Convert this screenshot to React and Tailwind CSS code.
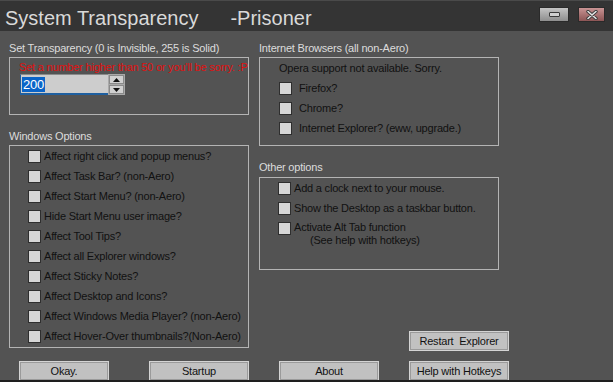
import React from 'react';

const font = { fontFamily: '"Liberation Sans", Arial, sans-serif' };

function Check({ label, gap = 'ml-[3px]' }) {
  return (
    <div className="flex h-[20px] items-center">
      <span className="h-[13px] w-[13px] shrink-0 border border-[#2e2e2e] bg-[#d6d6d6]" />
      <span className={`${gap} whitespace-pre text-[#111]`}>{label}</span>
    </div>
  );
}

function Btn({ children, className = '' }) {
  return (
    <button
      className={`flex h-[20px] items-center justify-center border border-[#d4d4d4] bg-[#c1c1c1] text-[#111] shadow-[inset_0_0_0_1px_#9a9a9a] ${className}`}
    >
      {children}
    </button>
  );
}

const windowsOptions = [
  'Affect right click and popup menus?',
  'Affect Task Bar? (non-Aero)',
  'Affect Start Menu? (non-Aero)',
  'Hide Start Menu user image?',
  'Affect Tool Tips?',
  'Affect all Explorer windows?',
  'Affect Sticky Notes?',
  'Affect Desktop and Icons?',
  'Affect Windows Media Player? (non-Aero)',
  'Affect Hover-Over thumbnails?(Non-Aero)',
];

export default function App() {
  return (
    <div
      style={font}
      className="flex h-[382px] w-[613px] flex-col overflow-hidden border-b-2 border-[#1e1e1e] bg-[#535353] text-[11px] leading-[14px] tracking-[-0.2px]"
    >
      {/* Title bar */}
      <div className="flex h-[31px] shrink-0 items-start justify-between border-t border-[#4a4a4a] bg-[#343434] pl-[5px] pr-[8px]">
        <div className="pt-[6px] text-[20px] leading-[23px] tracking-normal text-[#d9d9d9]">
          <span>System Transparency</span>
          <span className="ml-[32px]">-Prisoner</span>
        </div>
        <div className="flex gap-[9px] pt-[6px]">
          <div className="flex h-[15px] w-[30px] items-center justify-center border border-[#2a2a2a] bg-gradient-to-b from-[#c4c4c4] to-[#8e8e8e]">
            <span className="h-[5px] w-[11px] rounded-[1px] border border-[#3a3a3a] bg-[#d0d0d0]" />
          </div>
          <div className="flex h-[15px] w-[27px] items-center justify-center border border-[#2a2a2a] bg-gradient-to-b from-[#c99494] to-[#8c5555]">
            <svg width="12" height="10" viewBox="0 0 12 10">
              <path d="M2 1.5 L10 8.5 M10 1.5 L2 8.5" stroke="#3a3a3a" strokeWidth="3.4" strokeLinecap="round" />
              <path d="M2 1.5 L10 8.5 M10 1.5 L2 8.5" stroke="#e6e6e6" strokeWidth="1.6" strokeLinecap="round" />
            </svg>
          </div>
        </div>
      </div>

      {/* Body */}
      <div className="flex gap-[10px] pl-[9px]">
        {/* Left column */}
        <div className="flex w-[240px] flex-col">
          <div className="mt-[10px] h-[14px] text-[#dcdcdc]">Set Transparency (0 is Invisible, 255 is Solid)</div>
          <div className="mt-[2px] h-[58px] border border-[#b4b4b4] pl-[9px] pt-[3px]">
            <div className="h-[13px] leading-[13px] whitespace-nowrap text-[#e01010]">
              Set a number higher than 50 or you'll be sorry. :P
            </div>
            <div className="ml-[1px] flex h-[21px]">
              <div className="flex w-[88px] items-center border-b-2 border-l border-t border-[#1f5f9f] border-t-[#8a8a8a] bg-[#cdcdcd] pl-[1px]">
                <span className="bg-[#0a64c8] px-[1px] text-[13px] leading-[15px] text-white">200</span>
              </div>
              <div className="flex w-[17px] flex-col justify-center gap-[1px] bg-[#a9a9a9] px-[1px]">
                <div className="flex h-[9px] items-center justify-center border border-[#8a8a8a] bg-[#d0d0d0]">
                  <svg width="7" height="4" viewBox="0 0 7 4"><path d="M3.5 0 L7 4 L0 4Z" fill="#111" /></svg>
                </div>
                <div className="flex h-[9px] items-center justify-center border border-[#8a8a8a] bg-[#d0d0d0]">
                  <svg width="7" height="4" viewBox="0 0 7 4"><path d="M0 0 L7 0 L3.5 4Z" fill="#111" /></svg>
                </div>
              </div>
            </div>
          </div>

          <div className="mt-[14px] h-[14px] text-[#dcdcdc]">Windows Options</div>
          <div className="mt-[2px] flex h-[203px] flex-col border border-[#b4b4b4] pl-[18px]">
            {windowsOptions.map((o) => (
              <Check key={o} label={o} />
            ))}
          </div>
        </div>

        {/* Right column */}
        <div className="flex w-[240px] flex-col">
          <div className="mt-[10px] h-[14px] text-[#dcdcdc]">Internet Browsers (all non-Aero)</div>
          <div className="mt-[2px] flex h-[89px] flex-col border border-[#b4b4b4] pl-[19px]">
            <div className="flex h-[20px] items-center text-[#111]">Opera support not available. Sorry.</div>
            <Check label="Firefox?" gap="ml-[7px]" />
            <Check label="Chrome?" gap="ml-[7px]" />
            <Check label="Internet Explorer? (eww, upgrade.)" gap="ml-[7px]" />
          </div>

          <div className="mt-[14px] h-[14px] text-[#dcdcdc]">Other options</div>
          <div className="mt-[3px] flex h-[93px] flex-col border border-[#b4b4b4] pl-[18px]">
            <Check label="Add a clock next to your mouse." />
            <Check label="Show the Desktop as a taskbar button." />
            <div className="flex items-start pt-[3px]">
              <span className="mt-[1px] h-[13px] w-[13px] shrink-0 border border-[#2e2e2e] bg-[#d6d6d6]" />
              <div className="ml-[3px] leading-[13px] text-[#111]">
                <div>Activate Alt Tab function</div>
                <div className="pl-[16px]">(See help with hotkeys)</div>
              </div>
            </div>
          </div>

          <Btn className="ml-[150px] mt-[61px] w-[100px]">Restart&nbsp; Explorer</Btn>
        </div>
      </div>

      {/* Bottom buttons */}
      <div className="mt-[10px] flex pl-[19px]">
        <Btn className="w-[90px]">Okay.</Btn>
        <Btn className="ml-[40px] w-[100px]">Startup</Btn>
        <Btn className="ml-[30px] w-[100px]">About</Btn>
        <Btn className="ml-[30px] w-[100px]">Help with Hotkeys</Btn>
      </div>
    </div>
  );
}
